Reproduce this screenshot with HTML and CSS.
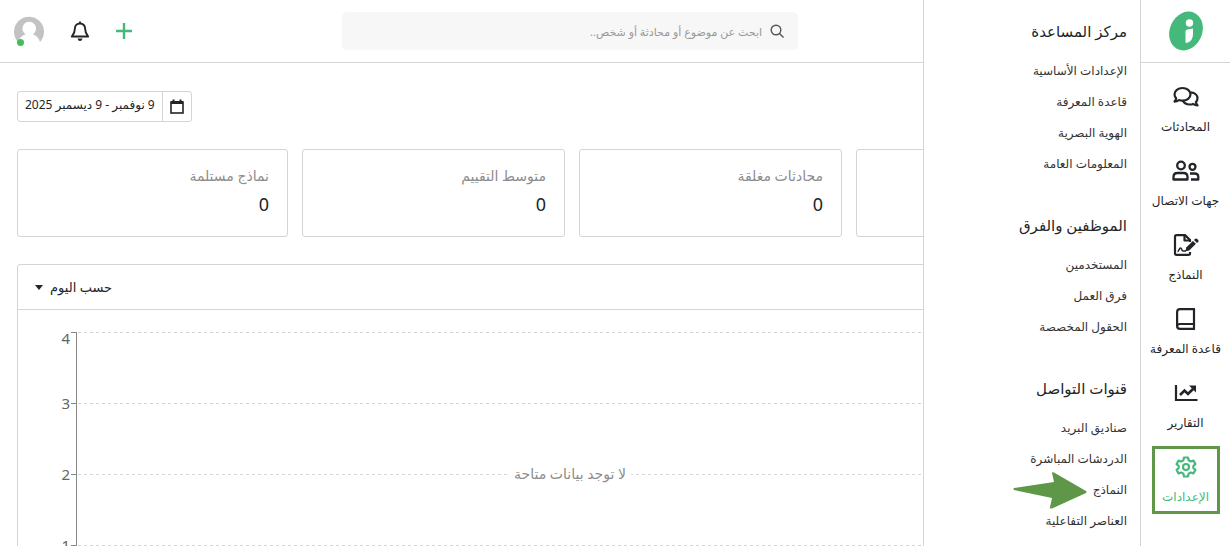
FILE: index.html
```
<!DOCTYPE html>
<html lang="ar" dir="rtl">
<head>
    <meta charset="UTF-8">
    <meta name="viewport" content="width=device-width, initial-scale=1.0">
    <title>التقارير</title>
    <link rel="stylesheet" href="styles.css">
</head>
<body>
    <div class="app">
        <aside class="rail">
            <a href="#" class="logo" aria-label="الرئيسية">
                <svg width="36" height="40" viewBox="0 0 36 40">
                    <ellipse cx="18" cy="20" rx="16.200" ry="20" transform="rotate(24 18 20)" fill="#45b97c"/>
                    <circle cx="21.500" cy="12" r="3.700" fill="#fff"/>
                    <path d="M17.500 20.500Q17.500 18.700 19.300 18.400L25 17.500V23Q25 30.500 18.200 32Q17.500 32 17.500 31.300Z" fill="#fff"/>
                </svg>
            </a>
            <nav class="rail-nav">
                <a href="#" class="rail-item">
                    <svg width="26" height="22" viewBox="0 0 26 22" fill="none" stroke="#212529" stroke-width="2.200" stroke-linejoin="round">
                        <path d="M9.500 2C14 2 17.500 4.700 17.500 8.300S14 14.600 9.500 14.600C8.200 14.600 7 14.400 6 14C4.800 15 3.300 15.600 1.500 15.600C2.400 14.600 3 13.400 3.200 12.200C2.100 11.100 1.500 9.800 1.500 8.300C1.500 4.700 5 2 9.500 2Z"/>
                        <path d="M18 6.400C21.800 6.800 24.500 9.200 24.500 12.200C24.500 13.700 23.900 15 22.900 16C23.100 17.300 23.700 18.400 24.500 19.500C22.700 19.500 21.200 18.800 20 17.900C19 18.300 17.900 18.500 16.700 18.500C13.500 18.500 10.900 17 9.700 14.800"/>
                    </svg>
                    <span>المحادثات</span>
                </a>
                <a href="#" class="rail-item">
                    <svg width="28" height="22" viewBox="0 0 28 22" fill="none" stroke="#212529" stroke-width="2.300" stroke-linejoin="round">
                        <circle cx="9" cy="5.500" r="3.800"/>
                        <path d="M1.500 19.500V17C1.500 14.500 3.300 13 5.500 13H11.500C13.700 13 15.500 14.500 15.500 17V19.500Z"/>
                        <circle cx="20.500" cy="6.800" r="3"/>
                        <path d="M18 13.500H22.500C24.700 13.500 26.300 15 26.300 17V19.500H19"/>
                    </svg>
                    <span>جهات الاتصال</span>
                </a>
                <a href="#" class="rail-item">
                    <svg width="26" height="22" viewBox="0 0 26 22" fill="none" stroke="#212529" stroke-width="2.200" stroke-linejoin="round">
                        <path d="M17 8V6L12 1.100H3.500Q2 1.100 2 2.500V19.500Q2 20.900 3.500 20.900H15.500Q17 20.900 17 19.500V18"/>
                        <path d="M11.500 1V6.500H17"/>
                        <path d="M4.500 17.500C6 17.500 6 14 7.500 14S8.500 17 10 17H13" stroke-width="1.600"/>
                        <path d="M12.500 17.200L13.200 13.600L19.900 6.900L22.900 9.800L16.200 16.500Z" fill="#212529" stroke="none"/>
                        <path d="M21 5.900L22.200 4.800Q23.200 4 24.200 5L25.200 6Q26 7 25.200 7.900L24 9Z" fill="#212529" stroke="none"/>
                    </svg>
                    <span>النماذج</span>
                </a>
                <a href="#" class="rail-item">
                    <svg width="20" height="22" viewBox="0 0 20 22" fill="none" stroke="#212529" stroke-width="2.200" stroke-linejoin="round">
                        <path d="M19 1.100H4Q1.100 1.100 1.100 4V18Q1.100 20.900 4 20.900H19"/>
                        <path d="M18 1V21M1.100 18Q1.100 16 4 16H18"/>
                    </svg>
                    <span>قاعدة المعرفة</span>
                </a>
                <a href="#" class="rail-item">
                    <svg width="24" height="22" viewBox="0 0 24 22" fill="none" stroke="#212529" stroke-width="2.200">
                        <path d="M2 3V18H23.500"/>
                        <path d="M6 13L10.500 8.500L14 12L19 7" stroke-width="2.600"/>
                        <path d="M15 3.500H22V10.500Z" fill="#212529" stroke="none"/>
                    </svg>
                    <span>التقارير</span>
                </a>
                <a href="#" class="rail-item active">
                    <svg width="22" height="22" viewBox="0 0 22 22" fill="none" stroke="#45b97c" stroke-width="2.200" stroke-linejoin="round">
                        <path d="M9 1.500H13L13.600 4.300L15.700 5.500L18.400 4.600L20.400 8.100L18.300 10V12L20.400 13.900L18.400 17.400L15.700 16.500L13.600 17.700L13 20.500H9L8.400 17.700L6.300 16.500L3.600 17.400L1.600 13.900L3.700 12V10L1.600 8.100L3.600 4.600L6.300 5.500L8.400 4.300Z"/>
                        <circle cx="11" cy="11" r="3"/>
                    </svg>
                    <span>الإعدادات</span>
                </a>
            </nav>
        </aside>

        <div class="content">
            <header class="topbar">
                <div class="search">
                    <svg width="14" height="14" viewBox="0 0 14 14" fill="none" stroke="#555" stroke-width="1.400">
                        <circle cx="6" cy="6" r="4.800"/>
                        <path d="M9.500 9.500L13.500 13.500"/>
                    </svg>
                    <input type="search" aria-label="بحث" placeholder="ابحث عن موضوع أو محادثة أو شخص..">
                </div>
                <div class="tools">
                    <button class="icon-btn" aria-label="إضافة">
                        <svg width="16" height="16" viewBox="0 0 16 16" stroke="#45b97c" stroke-width="2.400">
                            <path d="M8 0V16M0 8H16"/>
                        </svg>
                    </button>
                    <button class="icon-btn" aria-label="الإشعارات">
                        <svg width="20" height="20" viewBox="0 0 20 20" fill="none" stroke="#212529" stroke-width="1.900" stroke-linejoin="round">
                            <path d="M10 2.500C6.800 2.500 4.900 4.800 4.900 7.600C4.900 12 3.500 13.500 1.800 15.500H18.200C16.500 13.500 15.100 12 15.100 7.600C15.100 4.800 13.200 2.500 10 2.500Z"/>
                            <path d="M10 0.500V2.500"/>
                            <path d="M7.500 17.500H12.500Q12 20 10 20T7.500 17.500Z" fill="#212529" stroke="none"/>
                        </svg>
                    </button>
                    <button class="icon-btn avatar" aria-label="الحساب">
                        <svg width="30" height="30" viewBox="0 0 30 30">
                            <path d="M4 26A15 15 0 1 1 26 26C25 22 22.500 19.500 19 18.500A6.800 7 0 1 0 11.500 18.500C8 19.500 5 22 4 26Z" fill="#c3c3c3"/>
                        </svg>
                        <span class="online"></span>
                    </button>
                </div>
            </header>

            <main class="page">
                <button class="date-range">
                    <span class="date-icon">
                        <svg width="14" height="15" viewBox="0 0 14 15" fill="none" stroke="#212529">
                            <rect x="1" y="3" width="12" height="11" stroke-width="1.600"/>
                            <path d="M1 3.500H13" stroke-width="3"/>
                            <path d="M3.500 0.500V3M10.500 0.500V3" stroke-width="2"/>
                        </svg>
                    </span>
                    <span class="date-text">9 نوفمبر - 9 ديسمبر 2025</span>
                </button>

                <section class="cards">
                    <div class="card"></div>
                    <div class="card">
                        <h3>محادثات مغلقة</h3>
                        <p>0</p>
                    </div>
                    <div class="card">
                        <h3>متوسط التقييم</h3>
                        <p>0</p>
                    </div>
                    <div class="card">
                        <h3>نماذج مستلمة</h3>
                        <p>0</p>
                    </div>
                </section>

                <section class="panel">
                    <div class="panel-header">
                        <button class="group-by">
                            <span>حسب اليوم</span>
                            <svg width="8" height="5" viewBox="0 0 8 5"><path d="M0 0H8L4 5Z" fill="#212529"/></svg>
                        </button>
                    </div>
                    <div class="chart">
                        <svg width="100%" height="320">
                            <g class="grid-lines">
                                <line x1="60" y1="22.500" x2="98%" y2="22.500"/>
                                <line x1="60" y1="93.500" x2="98%" y2="93.500"/>
                                <line x1="60" y1="164.500" x2="98%" y2="164.500"/>
                                <line x1="60" y1="235.500" x2="98%" y2="235.500"/>
                                <line x1="60" y1="306.500" x2="98%" y2="306.500"/>
                            </g>
                            <path class="axis" d="M53 22.500H59M53 93.500H59M53 164.500H59M53 235.500H59M53 306.500H59M58.500 22V307"/>
                            <g class="axis-labels">
                                <text x="52" y="34">4</text>
                                <text x="52" y="99">3</text>
                                <text x="52" y="170">2</text>
                                <text x="52" y="241">1</text>
                            </g>
                        </svg>
                        <span class="no-data">لا توجد بيانات متاحة</span>
                    </div>
                </section>
            </main>

            <!-- قائمة الإعدادات -->
            <nav class="flyout">
                <h2>مركز المساعدة</h2>
                <ul>
                    <li><a href="#">الإعدادات الأساسية</a></li>
                    <li><a href="#">قاعدة المعرفة</a></li>
                    <li><a href="#">الهوية البصرية</a></li>
                    <li><a href="#">المعلومات العامة</a></li>
                </ul>
                <h2>الموظفين والفرق</h2>
                <ul>
                    <li><a href="#">المستخدمين</a></li>
                    <li><a href="#">فرق العمل</a></li>
                    <li><a href="#">الحقول المخصصة</a></li>
                </ul>
                <h2>قنوات التواصل</h2>
                <ul>
                    <li><a href="#">صناديق البريد</a></li>
                    <li><a href="#">الدردشات المباشرة</a></li>
                    <li class="pointed">
                        <a href="#">النماذج</a>
                        <svg class="arrow" width="74" height="38" viewBox="0 0 74 38">
                            <path d="M1 16L41 10L39 1Q39 0 41 0.500L73 19Q74 20 73 21L39 36.500Q36 37 37 35L39 26L1 18Q0 17 1 16Z" fill="#5f9749"/>
                        </svg>
                    </li>
                    <li><a href="#">العناصر التفاعلية</a></li>
                </ul>
            </nav>
        </div>
    </div>
</body>
</html>
```
FILE: styles.css
```
* {
    margin: 0;
    padding: 0;
    box-sizing: border-box;
}

body {
    font-family: "Noto Sans", "DejaVu Sans", sans-serif;
    font-size: 12px;
    color: #212529;
    background: #fff;
    overflow: hidden;
}

a {
    color: inherit;
    text-decoration: none;
}

button,
input {
    font: inherit;
    color: inherit;
    background: none;
    border: none;
}

button {
    cursor: pointer;
}

svg {
    display: block;
    flex-shrink: 0;
}

.app {
    display: flex;
    height: 100vh;
}

/* الشريط الجانبي */
.rail {
    width: 90px;
    flex-shrink: 0;
    border-left: 1px solid #d5d5d5;
}

.logo {
    display: flex;
    align-items: center;
    justify-content: center;
    height: 63px;
    border-bottom: 1px solid #d5d5d5;
}

.rail-nav {
    display: flex;
    flex-direction: column;
    align-items: center;
    gap: 8px;
    padding-top: 13px;
}

.rail-item {
    display: flex;
    flex-direction: column;
    align-items: center;
    gap: 9px;
    height: 66px;
    padding-top: 10px;
    line-height: 20px;
    white-space: nowrap;
}

.rail-item.active {
    width: 68px;
    height: 68px;
    padding-top: 7px;
    border: 3px solid #5f9749;
    color: #45b97c;
}

.content {
    position: relative;
    flex: 1;
    min-width: 0;
    overflow: hidden;
}

/* الشريط العلوي */
.topbar {
    display: grid;
    grid-template-columns: 1fr 40% 1fr;
    align-items: center;
    height: 63px;
    border-bottom: 1px solid #d5d5d5;
}

.search {
    grid-column: 2;
    display: flex;
    align-items: center;
    gap: 8px;
    height: 38px;
    padding: 0 14px;
    background: #f7f7f7;
    border-radius: 5px;
}

.search input {
    flex: 1;
    font-size: 11px;
    outline: none;
}

.search input::placeholder {
    color: #999;
}

.tools {
    display: flex;
    align-items: center;
    justify-content: flex-end;
    gap: 26px;
    padding-left: 14px;
}

.avatar {
    position: relative;
}

.online {
    position: absolute;
    left: 3px;
    bottom: 0;
    width: 7px;
    height: 7px;
    border-radius: 50%;
    background: #3fc15a;
}

/* المحتوى */
.page {
    padding: 28px 17px 0;
}

.date-range {
    display: flex;
    align-items: stretch;
    height: 31px;
    margin-right: auto;
    border: 1px solid #d5d5d5;
    border-radius: 3px;
}

.date-icon {
    display: flex;
    align-items: center;
    padding: 0 7px;
    border-left: 1px solid #d5d5d5;
}

.date-text {
    padding: 0 7px;
    font-size: 12px;
    line-height: 26px;
}

.cards {
    display: grid;
    grid-template-columns: 267fr 263fr 263fr 271fr;
    gap: 14px;
    margin-top: 27px;
}

.card {
    height: 88px;
    padding: 14px 18px;
    border: 1px solid #d5d5d5;
    border-radius: 3px;
}

.card h3 {
    font-size: 14px;
    font-weight: 400;
    line-height: 24px;
    color: #8c8c8c;
}

.card p {
    font-size: 18px;
    line-height: 32px;
}

.panel {
    margin-top: 27px;
    border: 1px solid #d5d5d5;
    border-radius: 3px;
}

.panel-header {
    display: flex;
    justify-content: flex-end;
    padding: 0 17px;
    border-bottom: 1px solid #d5d5d5;
}

.group-by {
    display: flex;
    align-items: center;
    gap: 7px;
    height: 44px;
    font-size: 13px;
}

.chart {
    position: relative;
    direction: ltr;
}

.grid-lines line {
    stroke: #d5d5d5;
    stroke-dasharray: 3 3;
}

.axis {
    fill: none;
    stroke: #888;
}

.axis-labels text {
    font-size: 15px;
    text-anchor: end;
    fill: #666;
}

.no-data {
    position: absolute;
    top: 152px;
    left: 50%;
    transform: translateX(-50%);
    padding: 0 5px;
    font-size: 14px;
    line-height: 24px;
    direction: rtl;
    white-space: nowrap;
    color: #8c8c8c;
    background: #fff;
}

/* القائمة الفرعية */
.flyout {
    position: absolute;
    top: 0;
    right: 0;
    bottom: 0;
    width: 217px;
    padding: 19px 13px 0;
    background: #fff;
    border-left: 1px solid #d5d5d5;
}

.flyout h2 {
    margin-bottom: 12px;
    font-size: 15px;
    font-weight: 400;
    line-height: 24px;
}

.flyout ul {
    margin-bottom: 34px;
    list-style: none;
}

.flyout li {
    line-height: 31px;
    color: #333;
}

.pointed {
    position: relative;
}

.arrow {
    position: absolute;
    top: -2px;
    right: 40px;
}
```
